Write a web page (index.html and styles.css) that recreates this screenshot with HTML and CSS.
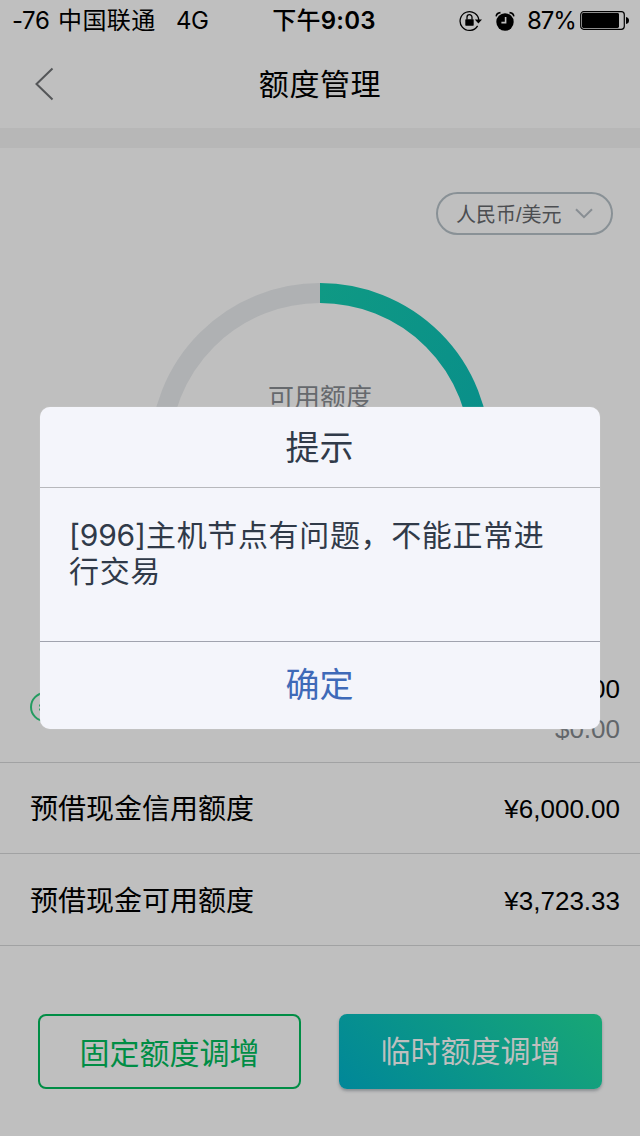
FILE: index.html
```html
<!DOCTYPE html>
<html lang="zh-CN">
<head>
<meta charset="utf-8">
<title>额度管理</title>
<link rel="stylesheet" href="styles.css">
</head>
<body>
<div class="screen">
  <header class="status">
    <div class="status-left"><span class="signal">-76</span><span class="carrier">中国联通</span><span class="network">4G</span></div>
    <div class="clock">下午<b>9:03</b></div>
    <div class="status-right">
      <svg class="lock" width="24" height="22" viewBox="0 0 24 22" fill="none" stroke="#000" stroke-width="1.3">
        <path d="M18.6 15.8A9.4 9.4 0 1 1 19.9 10.8"/>
        <path d="M15.8 9.6h7.2l-3.6 3.8z" fill="#000" stroke="none"/>
        <rect x="6.3" y="9.3" width="8.4" height="6.4" rx=".6" fill="#000" stroke="none"/>
        <path d="M8 9.6V7.2a2.5 2.5 0 0 1 5 0v2.4"/>
      </svg>
      <svg class="alarm" width="20" height="20" viewBox="0 0 20 20" fill="none">
        <circle cx="10" cy="11" r="8.7" fill="#000"/>
        <path d="M10.6 6v5.6H6.4" stroke="#bfbfbf" stroke-width="1.6"/>
        <path d="M1.2 5.4Q1.5 2 5.5 1.6M18.8 5.4Q18.5 2 14.5 1.6" stroke="#000" stroke-width="1.6"/>
      </svg>
      <span class="percent">87%</span>
      <svg class="battery" width="50" height="20" viewBox="0 0 50 20">
        <rect x=".7" y=".7" width="43.6" height="17.6" rx="3" fill="none" stroke="#000" stroke-width="1.2"/>
        <rect x="2" y="2" width="37" height="15" rx="1.4"/>
        <path d="M46 6q3 .5 3 3.500t-3 3.500z"/>
      </svg>
    </div>
  </header>
  <nav class="nav">
    <svg class="back" width="20" height="34" viewBox="0 0 20 34" fill="none" stroke="#545658" stroke-width="2"><path d="M17.500 1.500 1.500 17l16 15.500"/></svg>
    <h1 class="title">额度管理</h1>
  </nav>
  <div class="band"></div>
  <main class="main">
    <div class="picker"><span>人民币/美元</span>
      <svg width="18" height="11" viewBox="0 0 18 11" fill="none" stroke="#888e93" stroke-width="2"><path d="m1 1.200 8 8 8-8"/></svg>
    </div>
    <div class="gauge">
      <svg class="ring" width="340" height="340" viewBox="0 0 340 340" fill="none" stroke-width="20">
        <defs><linearGradient id="teal" x1="0" y1="0" x2="1" y2="1"><stop offset="0" stop-color="#0f9984"/><stop offset="1" stop-color="#078b8c"/></linearGradient></defs>
        <path d="M170 10A160 160 0 0 0 170 330" stroke="#afb1b3"/>
        <path d="M170 10A160 160 0 0 1 170 330" stroke="url(#teal)"/>
      </svg>
      <span class="gauge-label">可用额度</span>
    </div>
    <section class="row total">
      <svg class="coin" width="30" height="30" viewBox="0 0 30 30" fill="none" stroke="#239b60" stroke-width="2"><circle cx="15" cy="15" r="14"/><path d="M9 13.500h12M9 17.500h12"/></svg>
      <div class="amounts"><span>¥12,000.00</span><span class="usd">$0.00</span></div>
    </section>
    <section class="row credit"><span class="name">预借现金信用额度</span><span class="amount">¥6,000.00</span></section>
    <section class="row available"><span class="name">预借现金可用额度</span><span class="amount">¥3,723.33</span></section>
    <div class="actions">
      <button class="btn outline">固定额度调增</button>
      <button class="btn filled">临时额度调增</button>
    </div>
  </main>
  <div class="dialog" role="alertdialog">
    <h2 class="dialog-title">提示</h2>
    <p class="message"><span class="code">[996]</span>主机节点有问题，不能正常进行交易</p>
    <button class="confirm">确定</button>
  </div>
</div>
</body>
</html>
```
FILE: styles.css
```css
* { box-sizing: border-box; }
body { margin: 0; font-family: "Liberation Sans", "Noto Sans CJK SC", sans-serif; color: #000; }
h1, h2, p { margin: 0; font-weight: 400; }
button { font: inherit; margin: 0; padding: 0; border: 0; background: none; }
svg { display: block; flex: none; }
.screen { position: relative; width: 640px; height: 1136px; overflow: hidden; background: #bfbfbf; }

.status { display: grid; grid-template-columns: 1fr auto 1fr; align-items: center; height: 40px; padding: 1px 10px 0 12px; font: 24px/40px Inter, "Noto Sans CJK SC", sans-serif; white-space: nowrap; }
.status-left { display: flex; }
.signal { width: 46px; letter-spacing: -.4px; }
.carrier { width: 118px; letter-spacing: .4px; }
.network { letter-spacing: -.6px; }
.clock { padding-left: 6px; font-weight: 500; letter-spacing: .2px; }
.clock b { font-weight: 600; }
.status-right { display: flex; justify-content: flex-end; align-items: center; }
.alarm { margin: 0 12px 0 12px; }
.percent { width: 53px; letter-spacing: -1.1px; }

.nav { display: grid; grid-template-columns: 60px 1fr 60px; align-items: center; height: 88px; padding: 0 35px; }
.title { padding-top: 2px; text-align: center; font-size: 30px; line-height: 44px; letter-spacing: .6px; }
.band { height: 20px; background: #b7b7b7; }

.main { display: flex; flex-direction: column; }
.picker { display: flex; align-items: center; align-self: flex-end; gap: 13px; width: 177px; height: 43px; margin: 44px 27px 0 0; padding-left: 18px; border: 2px solid #899196; border-radius: 22px; font-size: 20px; color: #4c4e51; }
.gauge { display: grid; justify-items: center; height: 340px; margin-top: 48px; }
.gauge > * { grid-area: 1 / 1; }
.gauge-label { margin-top: 95px; font-size: 26px; line-height: 40px; color: #66696d; }

.row { display: flex; justify-content: space-between; align-items: center; padding: 0 20px 0 30px; border-bottom: 1px solid #a1a2a3; font-size: 26px; }
.name { padding-bottom: 2px; font-size: 28px; }
.amount { padding-top: 3px; }
.total { height: 140px; padding-top: 29px; }
.amounts { display: flex; flex-direction: column; align-items: flex-end; padding-top: 4px; line-height: 40px; }
.usd { color: #62666a; }
.credit { height: 91px; }
.available { height: 92px; }

.actions { display: grid; grid-template-columns: 263px 263px; gap: 38px; margin: 68px 0 0 38px; }
.btn { height: 75px; border-radius: 8px; font-size: 30px; line-height: 75px; }
.outline { border: 2px solid #008d45; color: #008d45; }
.filled { color: #bfbfbf; background: linear-gradient(45deg, #008799, #18a775); box-shadow: 0 2px 3px rgba(60, 70, 80, .4); }

.dialog { position: absolute; left: 40px; top: 407px; width: 560px; height: 322px; display: grid; grid-template-rows: 81px 154px 87px; border-radius: 10px; background: #f4f5fb; color: #303a49; box-shadow: 0 0 1px #ddd; }
.dialog-title { padding-right: 1px; text-align: center; font-size: 34px; line-height: 82px; border-bottom: 1px solid #b7b8bc; }
.message { padding: 29px 50px 0 29px; font-size: 30px; line-height: 36px; letter-spacing: .65px; border-bottom: 1px solid #a0a3ae; }
.code { display: inline-block; width: 77px; font-family: Inter, sans-serif; font-weight: 400; letter-spacing: -.2px; }
.confirm { padding-right: 1px; font-size: 34px; line-height: 87px; color: #3f6ab8; }
```
